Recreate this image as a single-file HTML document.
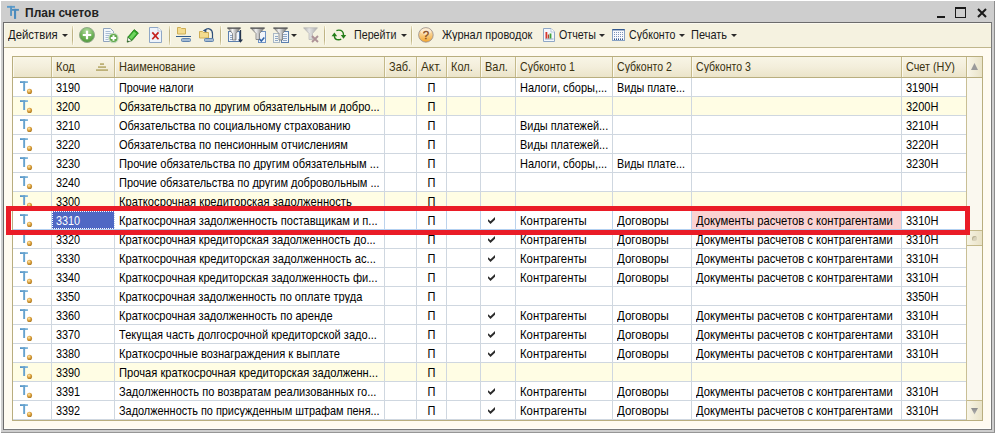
<!DOCTYPE html>
<html lang="ru"><head><meta charset="utf-8"><title>План счетов</title>
<style>
html,body{margin:0;padding:0}
body{width:995px;height:433px;overflow:hidden;background:#cecece;position:relative;font-family:"Liberation Sans",sans-serif;font-size:11px;color:#000}
.frame-t{position:absolute;left:0;top:0;width:995px;height:1px;background:#fff}
.frame-l{position:absolute;left:0;top:0;width:1px;height:433px;background:#fff}
.frame-r{position:absolute;left:994px;top:1px;width:1px;height:432px;background:#8c8c8c}
.frame-b{position:absolute;left:1px;top:432px;width:994px;height:1px;background:#969696}
.title{position:absolute;left:1px;top:1px;width:992px;height:21px}
.ticon{position:absolute;left:5px;top:4px}
.ttext{position:absolute;left:24px;top:4px;font-size:12px;line-height:16px;white-space:nowrap;color:#222;transform:scaleY(1.08);transform-origin:left center}
.wmin{position:absolute;left:936px;top:15px;width:8px;height:2px;background:#1a1a1a}
.wmax{position:absolute;left:954px;top:6px;width:9px;height:8px;border:1px solid #1a1a1a;border-top-width:2px}
.wcls{position:absolute;left:975.6px;top:6.600px}
.win{position:absolute;left:3px;top:22px;width:987px;height:406px;border:1px solid #6c6c6c;border-right-color:#7a7a7a;border-bottom-color:#7a7a7a;background:#fffbf1;box-shadow:inset -1px -1px 0 #fffffb}
.tb{position:absolute;left:0;top:0;width:987px;height:24px;background:#f5f2e0;border-bottom:1px solid #bfb68c;box-shadow:inset 1px 1px 0 #fbf9ef}
.tb .t{position:absolute;top:4px;line-height:14px;white-space:nowrap;transform:scaleY(1.14);transform-origin:left center;color:#1a1a1a}
.tb .sep{position:absolute;top:3px;width:1px;height:19px;background:linear-gradient(#e6dfc0,#bfb485 25%,#bfb485 75%,#e6dfc0);box-shadow:1px 0 0 #fbf9ee}
.tb .ar{position:absolute;top:11px;width:0;height:0;border-left:3px solid transparent;border-right:3px solid transparent;border-top:3px solid #2a2a2a}
.tb svg{position:absolute}
.grid{position:absolute;left:8px;top:33px;width:969px;height:363px;border:1px solid #b9ae7f;background:#fff;overflow:hidden}
.hdr{position:absolute;left:0;top:0;width:969px;height:20px;background:linear-gradient(#f8f5e6,#f3eedb 50%,#ebe4c9);border-bottom:1px solid #b9ae7f}
.hc{position:absolute;top:0;height:20px;border-right:1px solid #c4b98a;box-shadow:inset 1px 0 0 #fbf9ef}
.hc .t{position:absolute;left:4px;top:2px;line-height:14px;white-space:nowrap;color:#3a3210;transform:scaleY(1.14);transform-origin:left center}
.hc .sort{position:absolute;right:6px;top:6px}
.sbh{border-right:none;background:linear-gradient(90deg,#f8f5e7,#e9e3c8)}
.row{position:absolute;left:0;width:953px;height:18px;border-bottom:1px solid #cfd7e0;background:#fff}
.row.y{background:#fffde4}
.row.cur{border-bottom-color:#b2cff0}
.row.cur .c{border-right-color:#bdd3ec}
.c{position:absolute;top:0;height:18px;border-right:1px solid #cfd7e0;overflow:hidden}
.c .t{position:absolute;left:4px;top:2px;line-height:14px;white-space:nowrap;transform:scaleY(1.14);transform-origin:left center}
.c.ctr .t{left:0;right:0;text-align:center;transform-origin:center}
.c .ti{position:absolute;left:7px;top:3px}
.c .ck{position:absolute;left:7px;top:6px}
.c.sel{background:#4f68c4;outline:1px dotted #fff;outline-offset:-1px}
.c.sel .t{color:#fff}
.c.pink{background:#fbd2d2}
.sb{position:absolute;left:953px;top:21px;width:15px;height:342px;background:#faf8ef;border-left:1px solid #c9bf95}
.thumb{position:absolute;left:0;top:152px;width:15px;height:16px;background:linear-gradient(90deg,#f6f3e3,#e9e2c6);border-top:1px solid #c4b98a;border-bottom:1px solid #c4b98a;box-sizing:border-box}
.thumb i{position:absolute;left:5px;top:5px;width:5px;height:5px;border-radius:50%;background:#d8d2bb;box-shadow:inset 1px 1px 0 #bdb596}
.sbd{position:absolute;left:0;bottom:0;width:15px;height:19px;background:linear-gradient(90deg,#f8f5e7,#e9e3c8);border-top:1px solid #c4b98a}
.red{position:absolute;left:6px;top:206px;width:954px;height:19px;border:5px solid #ea1c27}

</style></head>
<body>
<div class="frame-t"></div><div class="frame-l"></div><div class="frame-r"></div><div class="frame-b"></div>
<div class="title"><svg class="ticon" width="16" height="16" viewBox="0 0 16 16"><rect x="1" y="0.900" width="8" height="1.900" fill="#5c9ccb"/><rect x="4.100" y="0.900" width="1.900" height="10" fill="#5695c4"/><rect x="5.900" y="3.900" width="7" height="1.900" fill="#4d8dbe"/><rect x="8" y="3.900" width="2.100" height="10" fill="#4b8bbd"/></svg><span class="ttext"><b>План счетов</b></span><i class="wmin"></i><i class="wmax"></i><svg class="wcls" width="10" height="10" viewBox="0 0 10 10"><path d="M1 1L9 9M9 1L1 9" stroke="#1a1a1a" stroke-width="2" fill="none"/></svg></div>
<div class="win">
<div class="tb">
<svg width="0" height="0" style="left:0;top:0"><defs><linearGradient id="fg" x1="0" x2="1" y1="0" y2="0"><stop offset="0" stop-color="#6f6f6f"/><stop offset="0.38" stop-color="#f2f2f2"/><stop offset="0.7" stop-color="#a4a4a4"/><stop offset="1" stop-color="#747474"/></linearGradient><linearGradient id="fgd" x1="0" x2="1" y1="0" y2="0"><stop offset="0" stop-color="#a9a9a9"/><stop offset="0.4" stop-color="#e4e4e4"/><stop offset="1" stop-color="#acacac"/></linearGradient></defs></svg>
<span class="t" style="left:4px;transform:scale(1.03,1.14)">Действия</span><i class="ar" style="left:58px"></i>
<i class="sep" style="left:68px"></i>
<svg style="left:75px;top:4px" width="16" height="16" viewBox="0 0 16 16"><defs><radialGradient id="gp" cx="0.5" cy="0.25" r="0.85"><stop offset="0" stop-color="#b5dca2"/><stop offset="0.55" stop-color="#6cb155"/><stop offset="1" stop-color="#468f34"/></radialGradient></defs><circle cx="8" cy="8" r="7.500" fill="url(#gp)" stroke="#93ab8c" stroke-width="1"/><path d="M8 3.800v8.400M3.800 8h8.400" stroke="#fff" stroke-width="2.200" fill="none"/></svg>
<svg style="left:99px;top:5px" width="16" height="16" viewBox="0 0 16 16"><path d="M0.500 0.500h7l3 3v10h-10z" fill="#f4f8fc" stroke="#8fa3bd"/><path d="M2.500 3.500h5M2.500 5.500h6M2.500 7.500h4M2.500 9.500h3M2.500 11.500h3" stroke="#a9bdd4" fill="none"/><circle cx="10.500" cy="10" r="4.600" fill="#5fa84a" stroke="#c3dabc" stroke-width="1.200"/><path d="M10.500 7.300v5.400M7.800 10h5.400" stroke="#fff" stroke-width="1.900" fill="none"/></svg>
<svg style="left:122px;top:6px" width="14" height="14" viewBox="0 0 14 14"><path d="M8.200 0.600l4.200 3.400-6.400 7.600-4.200-3.400z" fill="#2fa524" stroke="#1f7a18" stroke-width="0.800"/><path d="M8 2.600l2.400 2-5 6-2.400-2z" fill="#6fd45f"/><path d="M1.800 8.200l4.200 3.400-4.800 1.600z" fill="#f1f5ee" stroke="#2d6b24" stroke-width="0.700"/><path d="M1.200 13.200l0.500-2 1.400 1.200z" fill="#1d4d16"/></svg>
<svg style="left:145px;top:4px" width="13" height="16" viewBox="0 0 13 16"><path d="M0.500 0.500h8.500l3.500 3.500v11.500h-12z" fill="#eef4fb" stroke="#8fa7c6"/><path d="M9 0.500v3.500h3.500" fill="#fff" stroke="#a9bdd4" stroke-width="0.800"/><path d="M3.300 5.400l6.200 6.800M9.500 5.400l-6.200 6.800" stroke="#c4221f" stroke-width="1.700" fill="none"/></svg>
<i class="sep" style="left:165px"></i>
<svg style="left:172px;top:4px" width="16" height="16" viewBox="0 0 16 16"><path d="M1.500 0.500h3l1 1h4v5.500h-8z" fill="#f4dc8f" stroke="#cfae55"/><path d="M0 9.500h15" stroke="#2f5a8c" stroke-width="1" fill="none"/><rect x="5.500" y="11.500" width="9" height="3" rx="1" fill="#a3bad3" stroke="#5f83ae"/></svg>
<svg style="left:195px;top:4px" width="16" height="16" viewBox="0 0 16 16"><path d="M0.500 4.500h3l1 1h5v5.500h-9z" fill="#f4dc8f" stroke="#cfae55"/><path d="M6 3.300C9 0.300 13.500 1.800 13.500 7v5" stroke="#2e4f7a" stroke-width="1.200" fill="none"/><path d="M3.800 3.600l3.600-2.200v4.200z" fill="#2e4f7a"/><rect x="5.500" y="11.500" width="9" height="3" rx="1" fill="#a3bad3" stroke="#5f83ae"/></svg>
<i class="sep" style="left:216px"></i>
<svg style="left:223px;top:4px" width="16" height="16" viewBox="0 0 16 16"><rect x="1.5" y="4.5" width="11" height="10" fill="#f1f5fb" stroke="#5b7fae"/><path d="M3 8.5h3M3 10.5h3M3 12.5h3" stroke="#8fa7c6" fill="none"/><path d="M0.5 0.8h13L9 6.5v6.5h-3.5V6.5z" fill="url(#fg)" stroke="#6a6a6a" stroke-width="0.700"/><path d="M0.500 1.300h13" stroke="#5c5c5c" stroke-width="1.100"/><path d="M13.5 3v11" stroke="#27364d" stroke-width="1.3"/><path d="M11 12.5h5l-2.5 3.2z" fill="#27364d"/></svg>
<svg style="left:246px;top:4px" width="16" height="16" viewBox="0 0 16 16"><rect x="8.5" y="4.500" width="7" height="11" fill="#f1f5fb" stroke="#6f93c4"/><path d="M0.5 0.8h14L9.5 6.5v6h-3.5V6.5z" fill="url(#fg)" stroke="#6a6a6a" stroke-width="0.700"/><path d="M0.500 1.300h14" stroke="#5c5c5c" stroke-width="1.100"/><path d="M9.500 12l1.800 2 3-3.600" stroke="#2d62a8" stroke-width="1.500" fill="none"/></svg>
<svg style="left:269px;top:4px" width="16" height="16" viewBox="0 0 16 16"><rect x="0.5" y="6.5" width="6" height="9" fill="#f3f6f1" stroke="#a9b8c6"/><rect x="8.5" y="4.5" width="7" height="11" fill="#f1f5fb" stroke="#5b7fae"/><path d="M10 7.500h4M10 9.500h4M10 11.500h4M10 13.500h4M2 9.500h3M2 11.500h3M2 13.500h3" stroke="#8fa7c6" fill="none"/><path d="M0.5 0.8h14L9.500 6.500v6.500h-3.500V6.500z" fill="url(#fg)" stroke="#6a6a6a" stroke-width="0.700"/><path d="M0.500 1.300h14" stroke="#5c5c5c" stroke-width="1.100"/></svg>
<i class="ar" style="left:287px;top:11px"></i>
<svg style="left:299px;top:4px" width="16" height="16" viewBox="0 0 16 16"><path d="M0.5 0.8h14L9.500 6.500v6h-3.500V6.500z" fill="url(#fgd)" stroke="#b4b4b4" stroke-width="0.700"/><path d="M9 9l6 6M15 9l-6 6" stroke="#ad9297" stroke-width="1.900" fill="none"/></svg>
<i class="sep" style="left:320px"></i>
<svg style="left:327px;top:6px" width="16" height="12" viewBox="0 0 16 12"><path d="M3.400 7C3.400 9.500 5.500 10.800 7.700 10.800C8.600 10.800 9.500 10.600 10.200 10.200" stroke="#237d18" stroke-width="1.400" fill="none"/><path d="M5.400 1.600C6.100 1.300 6.900 1.100 7.700 1.100C10.500 1.100 12.500 3 12.500 6" stroke="#237d18" stroke-width="1.400" fill="none"/><path d="M3.400 3.400L0.600 7.200h5.600z" fill="#237d18"/><path d="M12.500 9.700L9.800 6h5.400z" fill="#237d18"/></svg>
<span class="t" style="left:350px;transform:scale(0.972,1.14)">Перейти</span><i class="ar" style="left:397px"></i>
<i class="sep" style="left:407px"></i>
<svg style="left:414px;top:4px" width="16" height="16" viewBox="0 0 16 16"><defs><linearGradient id="gq" x1="0" x2="0" y1="0" y2="1"><stop offset="0" stop-color="#fbe6c2"/><stop offset="0.5" stop-color="#f8cc84"/><stop offset="1" stop-color="#f3a52c"/></linearGradient></defs><circle cx="7.900" cy="7.900" r="7.300" fill="url(#gq)" stroke="#968c8c" stroke-width="0.800"/><ellipse cx="7.900" cy="4.600" rx="5.300" ry="3.200" fill="#fff" opacity="0.450"/><text x="8" y="12.400" text-anchor="middle" font-family="Liberation Sans, sans-serif" font-size="11.500" stroke="#8a4f1c" stroke-width="0.350" fill="#8a4f1c">?</text></svg>
<span class="t" style="left:438px">Журнал проводок</span>
<svg style="left:539px;top:5px" width="12" height="14" viewBox="0 0 12 14"><path d="M0.500 0.500h7.500l3.500 3.500v9.500h-11z" fill="#f4f8fc" stroke="#8fa7c6"/><path d="M8 0.500v3.500h3.500" fill="#fff" stroke="#a9bdd4" stroke-width="0.800"/><path d="M2 11h8.500" stroke="#8fa7c6" fill="none"/><rect x="2.500" y="4" width="1.800" height="6.500" fill="#d9372c"/><rect x="4.800" y="6.500" width="1.300" height="4" fill="#b5452c"/><rect x="6.600" y="5.500" width="1.800" height="5" fill="#3da03a"/></svg>
<span class="t" style="left:555px;transform:scale(0.97,1.14)">Отчеты</span><i class="ar" style="left:595px"></i>
<svg style="left:608px;top:6px" width="13" height="12" viewBox="0 0 13 12"><rect x="0.500" y="0.500" width="12" height="11" fill="#f8fafd" stroke="#88a2c4"/><path d="M0.500 0.700h12" stroke="#34598f" stroke-width="1.400"/><path d="M2.500 3v8M4.500 3v8M6.500 3v8M8.500 3v8M10.500 3v8" stroke="#7f95b8" stroke-dasharray="1 1" fill="none"/><path d="M2 10.500h9" stroke="#34598f" stroke-dasharray="1 1" fill="none"/></svg>
<span class="t" style="left:625px;transform:scale(0.965,1.14)">Субконто</span><i class="ar" style="left:675px"></i>
<span class="t" style="left:687px">Печать</span><i class="ar" style="left:727px"></i>
</div>
<div class="grid">
<div class="hdr"><div class="hc" style="left:0px;width:38px"><span class="t"></span></div><div class="hc" style="left:39px;width:62px"><span class="t">Код</span><svg class="sort" width="12" height="8" viewBox="0 0 12 8"><defs><linearGradient id="sg" x1="0" x2="0" y1="0" y2="1"><stop offset="0" stop-color="#cfc593"/><stop offset="1" stop-color="#b7aa70"/></linearGradient></defs><rect x="4" y="0" width="4" height="2" fill="url(#sg)"/><rect x="2" y="3" width="8" height="2" fill="url(#sg)"/><rect x="0" y="6" width="12" height="2" fill="url(#sg)"/></svg></div><div class="hc" style="left:102px;width:269px"><span class="t">Наименование</span></div><div class="hc" style="left:372px;width:31px"><span class="t">Заб.</span></div><div class="hc" style="left:404px;width:29px"><span class="t" style="transform:scale(1.07,1.14)">Акт.</span></div><div class="hc" style="left:434px;width:33px"><span class="t">Кол.</span></div><div class="hc" style="left:468px;width:34px"><span class="t">Вал.</span></div><div class="hc" style="left:503px;width:96px"><span class="t" style="transform:scale(0.96,1.14)">Субконто 1</span></div><div class="hc" style="left:600px;width:78px"><span class="t" style="transform:scale(0.96,1.14)">Субконто 2</span></div><div class="hc" style="left:679px;width:209px"><span class="t" style="transform:scale(0.96,1.14)">Субконто 3</span></div><div class="hc" style="left:889px;width:64px"><span class="t" style="transform:scale(0.985,1.14)">Счет (НУ)</span></div><div class="hc sbh" style="left:954px;width:15px"><svg width="7" height="7" viewBox="0 0 7 7" style="position:absolute;left:4px;top:6px"><path d="M3.500 0L7 7H0z" fill="#9a9a9a"/></svg></div></div>
<div class="row" style="top:21px"><div class="c" style="left:0px;width:38px"><svg class="ti" width="14" height="14" viewBox="0 0 14 14"><defs><radialGradient id="g0" cx="0.4" cy="0.35" r="0.7"><stop offset="0" stop-color="#ffeebb"/><stop offset="0.45" stop-color="#e2aa48"/><stop offset="1" stop-color="#a9741c"/></radialGradient><linearGradient id="t0" x1="0" x2="1" y1="0" y2="0"><stop offset="0" stop-color="#4f90c4"/><stop offset="1" stop-color="#86bbde"/></linearGradient></defs><rect x="0" y="0.200" width="8" height="1.800" fill="url(#t0)"/><rect x="3.200" y="0.200" width="1.900" height="9.800" fill="#65a2cf"/><circle cx="9.500" cy="10.400" r="2.550" fill="url(#g0)"/></svg></div><div class="c" style="left:39px;width:62px"><span class="t" style="transform:scale(0.985,1.14)">3190</span></div><div class="c" style="left:102px;width:269px"><span class="t" style="transform:scale(0.98,1.14)">Прочие налоги</span></div><div class="c" style="left:372px;width:31px"><span class="t"></span></div><div class="c ctr" style="left:404px;width:29px"><span class="t">П</span></div><div class="c" style="left:434px;width:33px"><span class="t"></span></div><div class="c" style="left:468px;width:34px"></div><div class="c" style="left:503px;width:96px"><span class="t">Налоги, сборы,...</span></div><div class="c" style="left:600px;width:78px"><span class="t" style="transform:scale(0.98,1.14)">Виды плате...</span></div><div class="c" style="left:679px;width:209px"><span class="t"></span></div><div class="c" style="left:889px;width:64px"><span class="t">3190Н</span></div></div>
<div class="row y" style="top:40px"><div class="c" style="left:0px;width:38px"><svg class="ti" width="14" height="14" viewBox="0 0 14 14"><defs><radialGradient id="g1" cx="0.4" cy="0.35" r="0.7"><stop offset="0" stop-color="#ffeebb"/><stop offset="0.45" stop-color="#e2aa48"/><stop offset="1" stop-color="#a9741c"/></radialGradient><linearGradient id="t1" x1="0" x2="1" y1="0" y2="0"><stop offset="0" stop-color="#4f90c4"/><stop offset="1" stop-color="#86bbde"/></linearGradient></defs><rect x="0" y="0.200" width="8" height="1.800" fill="url(#t1)"/><rect x="3.200" y="0.200" width="1.900" height="9.800" fill="#65a2cf"/><circle cx="9.500" cy="10.400" r="2.550" fill="url(#g1)"/></svg></div><div class="c" style="left:39px;width:62px"><span class="t" style="transform:scale(0.985,1.14)">3200</span></div><div class="c" style="left:102px;width:269px"><span class="t" style="transform:scale(1.0045,1.14)">Обязательства по другим обязательным и добро...</span></div><div class="c" style="left:372px;width:31px"><span class="t"></span></div><div class="c ctr" style="left:404px;width:29px"><span class="t">П</span></div><div class="c" style="left:434px;width:33px"><span class="t"></span></div><div class="c" style="left:468px;width:34px"></div><div class="c" style="left:503px;width:96px"><span class="t"></span></div><div class="c" style="left:600px;width:78px"><span class="t"></span></div><div class="c" style="left:679px;width:209px"><span class="t"></span></div><div class="c" style="left:889px;width:64px"><span class="t">3200Н</span></div></div>
<div class="row" style="top:59px"><div class="c" style="left:0px;width:38px"><svg class="ti" width="14" height="14" viewBox="0 0 14 14"><defs><radialGradient id="g2" cx="0.4" cy="0.35" r="0.7"><stop offset="0" stop-color="#ffeebb"/><stop offset="0.45" stop-color="#e2aa48"/><stop offset="1" stop-color="#a9741c"/></radialGradient><linearGradient id="t2" x1="0" x2="1" y1="0" y2="0"><stop offset="0" stop-color="#4f90c4"/><stop offset="1" stop-color="#86bbde"/></linearGradient></defs><rect x="0" y="0.200" width="8" height="1.800" fill="url(#t2)"/><rect x="3.200" y="0.200" width="1.900" height="9.800" fill="#65a2cf"/><circle cx="9.500" cy="10.400" r="2.550" fill="url(#g2)"/></svg></div><div class="c" style="left:39px;width:62px"><span class="t" style="transform:scale(0.985,1.14)">3210</span></div><div class="c" style="left:102px;width:269px"><span class="t" style="transform:scale(0.996,1.14)">Обязательства по социальному страхованию</span></div><div class="c" style="left:372px;width:31px"><span class="t"></span></div><div class="c ctr" style="left:404px;width:29px"><span class="t">П</span></div><div class="c" style="left:434px;width:33px"><span class="t"></span></div><div class="c" style="left:468px;width:34px"></div><div class="c" style="left:503px;width:96px"><span class="t" style="transform:scale(0.993,1.14)">Виды платежей...</span></div><div class="c" style="left:600px;width:78px"><span class="t"></span></div><div class="c" style="left:679px;width:209px"><span class="t"></span></div><div class="c" style="left:889px;width:64px"><span class="t">3210Н</span></div></div>
<div class="row" style="top:78px"><div class="c" style="left:0px;width:38px"><svg class="ti" width="14" height="14" viewBox="0 0 14 14"><defs><radialGradient id="g3" cx="0.4" cy="0.35" r="0.7"><stop offset="0" stop-color="#ffeebb"/><stop offset="0.45" stop-color="#e2aa48"/><stop offset="1" stop-color="#a9741c"/></radialGradient><linearGradient id="t3" x1="0" x2="1" y1="0" y2="0"><stop offset="0" stop-color="#4f90c4"/><stop offset="1" stop-color="#86bbde"/></linearGradient></defs><rect x="0" y="0.200" width="8" height="1.800" fill="url(#t3)"/><rect x="3.200" y="0.200" width="1.900" height="9.800" fill="#65a2cf"/><circle cx="9.500" cy="10.400" r="2.550" fill="url(#g3)"/></svg></div><div class="c" style="left:39px;width:62px"><span class="t" style="transform:scale(0.985,1.14)">3220</span></div><div class="c" style="left:102px;width:269px"><span class="t" style="transform:scale(1.004,1.14)">Обязательства по пенсионным отчислениям</span></div><div class="c" style="left:372px;width:31px"><span class="t"></span></div><div class="c ctr" style="left:404px;width:29px"><span class="t">П</span></div><div class="c" style="left:434px;width:33px"><span class="t"></span></div><div class="c" style="left:468px;width:34px"></div><div class="c" style="left:503px;width:96px"><span class="t" style="transform:scale(0.993,1.14)">Виды платежей...</span></div><div class="c" style="left:600px;width:78px"><span class="t"></span></div><div class="c" style="left:679px;width:209px"><span class="t"></span></div><div class="c" style="left:889px;width:64px"><span class="t">3220Н</span></div></div>
<div class="row" style="top:97px"><div class="c" style="left:0px;width:38px"><svg class="ti" width="14" height="14" viewBox="0 0 14 14"><defs><radialGradient id="g4" cx="0.4" cy="0.35" r="0.7"><stop offset="0" stop-color="#ffeebb"/><stop offset="0.45" stop-color="#e2aa48"/><stop offset="1" stop-color="#a9741c"/></radialGradient><linearGradient id="t4" x1="0" x2="1" y1="0" y2="0"><stop offset="0" stop-color="#4f90c4"/><stop offset="1" stop-color="#86bbde"/></linearGradient></defs><rect x="0" y="0.200" width="8" height="1.800" fill="url(#t4)"/><rect x="3.200" y="0.200" width="1.900" height="9.800" fill="#65a2cf"/><circle cx="9.500" cy="10.400" r="2.550" fill="url(#g4)"/></svg></div><div class="c" style="left:39px;width:62px"><span class="t" style="transform:scale(0.985,1.14)">3230</span></div><div class="c" style="left:102px;width:269px"><span class="t" style="transform:scale(1.009,1.14)">Прочие обязательства по другим обязательным ...</span></div><div class="c" style="left:372px;width:31px"><span class="t"></span></div><div class="c ctr" style="left:404px;width:29px"><span class="t">П</span></div><div class="c" style="left:434px;width:33px"><span class="t"></span></div><div class="c" style="left:468px;width:34px"></div><div class="c" style="left:503px;width:96px"><span class="t">Налоги, сборы,...</span></div><div class="c" style="left:600px;width:78px"><span class="t" style="transform:scale(0.98,1.14)">Виды плате...</span></div><div class="c" style="left:679px;width:209px"><span class="t"></span></div><div class="c" style="left:889px;width:64px"><span class="t">3230Н</span></div></div>
<div class="row" style="top:116px"><div class="c" style="left:0px;width:38px"><svg class="ti" width="14" height="14" viewBox="0 0 14 14"><defs><radialGradient id="g5" cx="0.4" cy="0.35" r="0.7"><stop offset="0" stop-color="#ffeebb"/><stop offset="0.45" stop-color="#e2aa48"/><stop offset="1" stop-color="#a9741c"/></radialGradient><linearGradient id="t5" x1="0" x2="1" y1="0" y2="0"><stop offset="0" stop-color="#4f90c4"/><stop offset="1" stop-color="#86bbde"/></linearGradient></defs><rect x="0" y="0.200" width="8" height="1.800" fill="url(#t5)"/><rect x="3.200" y="0.200" width="1.900" height="9.800" fill="#65a2cf"/><circle cx="9.500" cy="10.400" r="2.550" fill="url(#g5)"/></svg></div><div class="c" style="left:39px;width:62px"><span class="t" style="transform:scale(0.985,1.14)">3240</span></div><div class="c" style="left:102px;width:269px"><span class="t" style="transform:scale(1.0,1.14)">Прочие обязательства по другим добровольным ...</span></div><div class="c" style="left:372px;width:31px"><span class="t"></span></div><div class="c ctr" style="left:404px;width:29px"><span class="t">П</span></div><div class="c" style="left:434px;width:33px"><span class="t"></span></div><div class="c" style="left:468px;width:34px"></div><div class="c" style="left:503px;width:96px"><span class="t"></span></div><div class="c" style="left:600px;width:78px"><span class="t"></span></div><div class="c" style="left:679px;width:209px"><span class="t"></span></div><div class="c" style="left:889px;width:64px"><span class="t"></span></div></div>
<div class="row y" style="top:135px"><div class="c" style="left:0px;width:38px"><svg class="ti" width="14" height="14" viewBox="0 0 14 14"><defs><radialGradient id="g6" cx="0.4" cy="0.35" r="0.7"><stop offset="0" stop-color="#ffeebb"/><stop offset="0.45" stop-color="#e2aa48"/><stop offset="1" stop-color="#a9741c"/></radialGradient><linearGradient id="t6" x1="0" x2="1" y1="0" y2="0"><stop offset="0" stop-color="#4f90c4"/><stop offset="1" stop-color="#86bbde"/></linearGradient></defs><rect x="0" y="0.200" width="8" height="1.800" fill="url(#t6)"/><rect x="3.200" y="0.200" width="1.900" height="9.800" fill="#65a2cf"/><circle cx="9.500" cy="10.400" r="2.550" fill="url(#g6)"/></svg></div><div class="c" style="left:39px;width:62px"><span class="t" style="transform:scale(0.985,1.14)">3300</span></div><div class="c" style="left:102px;width:269px"><span class="t" style="transform:scale(1.0166,1.14)">Краткосрочная кредиторская задолженность</span></div><div class="c" style="left:372px;width:31px"><span class="t"></span></div><div class="c ctr" style="left:404px;width:29px"><span class="t">П</span></div><div class="c" style="left:434px;width:33px"><span class="t"></span></div><div class="c" style="left:468px;width:34px"></div><div class="c" style="left:503px;width:96px"><span class="t"></span></div><div class="c" style="left:600px;width:78px"><span class="t"></span></div><div class="c" style="left:679px;width:209px"><span class="t"></span></div><div class="c" style="left:889px;width:64px"><span class="t"></span></div></div>
<div class="row cur" style="top:154px"><div class="c" style="left:0px;width:38px"><svg class="ti" width="14" height="14" viewBox="0 0 14 14"><defs><radialGradient id="g7" cx="0.4" cy="0.35" r="0.7"><stop offset="0" stop-color="#ffeebb"/><stop offset="0.45" stop-color="#e2aa48"/><stop offset="1" stop-color="#a9741c"/></radialGradient><linearGradient id="t7" x1="0" x2="1" y1="0" y2="0"><stop offset="0" stop-color="#4f90c4"/><stop offset="1" stop-color="#86bbde"/></linearGradient></defs><rect x="0" y="0.200" width="8" height="1.800" fill="url(#t7)"/><rect x="3.200" y="0.200" width="1.900" height="9.800" fill="#65a2cf"/><circle cx="9.500" cy="10.400" r="2.550" fill="url(#g7)"/></svg></div><div class="c sel" style="left:39px;width:62px"><span class="t" style="transform:scale(0.985,1.14)">3310</span></div><div class="c" style="left:102px;width:269px"><span class="t" style="transform:scale(1.0115,1.14)">Краткосрочная задолженность поставщикам и п...</span></div><div class="c" style="left:372px;width:31px"><span class="t"></span></div><div class="c ctr" style="left:404px;width:29px"><span class="t">П</span></div><div class="c" style="left:434px;width:33px"><span class="t"></span></div><div class="c" style="left:468px;width:34px"><svg class="ck" width="8" height="8" viewBox="0 0 8 8"><path d="M0 2.200L2.500 4.300L7 0V2.800L2.500 6.900L0 4.300Z" fill="#2b2b2b"/></svg></div><div class="c" style="left:503px;width:96px"><span class="t" style="transform:scale(1.03,1.14)">Контрагенты</span></div><div class="c" style="left:600px;width:78px"><span class="t" style="transform:scale(1.045,1.14)">Договоры</span></div><div class="c pink" style="left:679px;width:209px"><span class="t" style="transform:scale(1.023,1.14)">Документы расчетов с контрагентами</span></div><div class="c" style="left:889px;width:64px"><span class="t">3310Н</span></div></div>
<div class="row" style="top:173px"><div class="c" style="left:0px;width:38px"><svg class="ti" width="14" height="14" viewBox="0 0 14 14"><defs><radialGradient id="g8" cx="0.4" cy="0.35" r="0.7"><stop offset="0" stop-color="#ffeebb"/><stop offset="0.45" stop-color="#e2aa48"/><stop offset="1" stop-color="#a9741c"/></radialGradient><linearGradient id="t8" x1="0" x2="1" y1="0" y2="0"><stop offset="0" stop-color="#4f90c4"/><stop offset="1" stop-color="#86bbde"/></linearGradient></defs><rect x="0" y="0.200" width="8" height="1.800" fill="url(#t8)"/><rect x="3.200" y="0.200" width="1.900" height="9.800" fill="#65a2cf"/><circle cx="9.500" cy="10.400" r="2.550" fill="url(#g8)"/></svg></div><div class="c" style="left:39px;width:62px"><span class="t" style="transform:scale(0.985,1.14)">3320</span></div><div class="c" style="left:102px;width:269px"><span class="t" style="transform:scale(1.0115,1.14)">Краткосрочная кредиторская задолженность до...</span></div><div class="c" style="left:372px;width:31px"><span class="t"></span></div><div class="c ctr" style="left:404px;width:29px"><span class="t">П</span></div><div class="c" style="left:434px;width:33px"><span class="t"></span></div><div class="c" style="left:468px;width:34px"><svg class="ck" width="8" height="8" viewBox="0 0 8 8"><path d="M0 2.200L2.500 4.300L7 0V2.800L2.500 6.900L0 4.300Z" fill="#2b2b2b"/></svg></div><div class="c" style="left:503px;width:96px"><span class="t" style="transform:scale(1.03,1.14)">Контрагенты</span></div><div class="c" style="left:600px;width:78px"><span class="t" style="transform:scale(1.045,1.14)">Договоры</span></div><div class="c" style="left:679px;width:209px"><span class="t" style="transform:scale(1.023,1.14)">Документы расчетов с контрагентами</span></div><div class="c" style="left:889px;width:64px"><span class="t">3310Н</span></div></div>
<div class="row" style="top:192px"><div class="c" style="left:0px;width:38px"><svg class="ti" width="14" height="14" viewBox="0 0 14 14"><defs><radialGradient id="g9" cx="0.4" cy="0.35" r="0.7"><stop offset="0" stop-color="#ffeebb"/><stop offset="0.45" stop-color="#e2aa48"/><stop offset="1" stop-color="#a9741c"/></radialGradient><linearGradient id="t9" x1="0" x2="1" y1="0" y2="0"><stop offset="0" stop-color="#4f90c4"/><stop offset="1" stop-color="#86bbde"/></linearGradient></defs><rect x="0" y="0.200" width="8" height="1.800" fill="url(#t9)"/><rect x="3.200" y="0.200" width="1.900" height="9.800" fill="#65a2cf"/><circle cx="9.500" cy="10.400" r="2.550" fill="url(#g9)"/></svg></div><div class="c" style="left:39px;width:62px"><span class="t" style="transform:scale(0.985,1.14)">3330</span></div><div class="c" style="left:102px;width:269px"><span class="t" style="transform:scale(1.016,1.14)">Краткосрочная кредиторская задолженность ас...</span></div><div class="c" style="left:372px;width:31px"><span class="t"></span></div><div class="c ctr" style="left:404px;width:29px"><span class="t">П</span></div><div class="c" style="left:434px;width:33px"><span class="t"></span></div><div class="c" style="left:468px;width:34px"><svg class="ck" width="8" height="8" viewBox="0 0 8 8"><path d="M0 2.200L2.500 4.300L7 0V2.800L2.500 6.900L0 4.300Z" fill="#2b2b2b"/></svg></div><div class="c" style="left:503px;width:96px"><span class="t" style="transform:scale(1.03,1.14)">Контрагенты</span></div><div class="c" style="left:600px;width:78px"><span class="t" style="transform:scale(1.045,1.14)">Договоры</span></div><div class="c" style="left:679px;width:209px"><span class="t" style="transform:scale(1.023,1.14)">Документы расчетов с контрагентами</span></div><div class="c" style="left:889px;width:64px"><span class="t">3310Н</span></div></div>
<div class="row" style="top:211px"><div class="c" style="left:0px;width:38px"><svg class="ti" width="14" height="14" viewBox="0 0 14 14"><defs><radialGradient id="g10" cx="0.4" cy="0.35" r="0.7"><stop offset="0" stop-color="#ffeebb"/><stop offset="0.45" stop-color="#e2aa48"/><stop offset="1" stop-color="#a9741c"/></radialGradient><linearGradient id="t10" x1="0" x2="1" y1="0" y2="0"><stop offset="0" stop-color="#4f90c4"/><stop offset="1" stop-color="#86bbde"/></linearGradient></defs><rect x="0" y="0.200" width="8" height="1.800" fill="url(#t10)"/><rect x="3.200" y="0.200" width="1.900" height="9.800" fill="#65a2cf"/><circle cx="9.500" cy="10.400" r="2.550" fill="url(#g10)"/></svg></div><div class="c" style="left:39px;width:62px"><span class="t" style="transform:scale(0.985,1.14)">3340</span></div><div class="c" style="left:102px;width:269px"><span class="t" style="transform:scale(1.008,1.14)">Краткосрочная кредиторская задолженность фи...</span></div><div class="c" style="left:372px;width:31px"><span class="t"></span></div><div class="c ctr" style="left:404px;width:29px"><span class="t">П</span></div><div class="c" style="left:434px;width:33px"><span class="t"></span></div><div class="c" style="left:468px;width:34px"><svg class="ck" width="8" height="8" viewBox="0 0 8 8"><path d="M0 2.200L2.500 4.300L7 0V2.800L2.500 6.900L0 4.300Z" fill="#2b2b2b"/></svg></div><div class="c" style="left:503px;width:96px"><span class="t" style="transform:scale(1.03,1.14)">Контрагенты</span></div><div class="c" style="left:600px;width:78px"><span class="t" style="transform:scale(1.045,1.14)">Договоры</span></div><div class="c" style="left:679px;width:209px"><span class="t" style="transform:scale(1.023,1.14)">Документы расчетов с контрагентами</span></div><div class="c" style="left:889px;width:64px"><span class="t">3310Н</span></div></div>
<div class="row" style="top:230px"><div class="c" style="left:0px;width:38px"><svg class="ti" width="14" height="14" viewBox="0 0 14 14"><defs><radialGradient id="g11" cx="0.4" cy="0.35" r="0.7"><stop offset="0" stop-color="#ffeebb"/><stop offset="0.45" stop-color="#e2aa48"/><stop offset="1" stop-color="#a9741c"/></radialGradient><linearGradient id="t11" x1="0" x2="1" y1="0" y2="0"><stop offset="0" stop-color="#4f90c4"/><stop offset="1" stop-color="#86bbde"/></linearGradient></defs><rect x="0" y="0.200" width="8" height="1.800" fill="url(#t11)"/><rect x="3.200" y="0.200" width="1.900" height="9.800" fill="#65a2cf"/><circle cx="9.500" cy="10.400" r="2.550" fill="url(#g11)"/></svg></div><div class="c" style="left:39px;width:62px"><span class="t" style="transform:scale(0.985,1.14)">3350</span></div><div class="c" style="left:102px;width:269px"><span class="t" style="transform:scale(1.005,1.14)">Краткосрочная задолженность по оплате труда</span></div><div class="c" style="left:372px;width:31px"><span class="t"></span></div><div class="c ctr" style="left:404px;width:29px"><span class="t">П</span></div><div class="c" style="left:434px;width:33px"><span class="t"></span></div><div class="c" style="left:468px;width:34px"></div><div class="c" style="left:503px;width:96px"><span class="t"></span></div><div class="c" style="left:600px;width:78px"><span class="t"></span></div><div class="c" style="left:679px;width:209px"><span class="t"></span></div><div class="c" style="left:889px;width:64px"><span class="t">3350Н</span></div></div>
<div class="row" style="top:249px"><div class="c" style="left:0px;width:38px"><svg class="ti" width="14" height="14" viewBox="0 0 14 14"><defs><radialGradient id="g12" cx="0.4" cy="0.35" r="0.7"><stop offset="0" stop-color="#ffeebb"/><stop offset="0.45" stop-color="#e2aa48"/><stop offset="1" stop-color="#a9741c"/></radialGradient><linearGradient id="t12" x1="0" x2="1" y1="0" y2="0"><stop offset="0" stop-color="#4f90c4"/><stop offset="1" stop-color="#86bbde"/></linearGradient></defs><rect x="0" y="0.200" width="8" height="1.800" fill="url(#t12)"/><rect x="3.200" y="0.200" width="1.900" height="9.800" fill="#65a2cf"/><circle cx="9.500" cy="10.400" r="2.550" fill="url(#g12)"/></svg></div><div class="c" style="left:39px;width:62px"><span class="t" style="transform:scale(0.985,1.14)">3360</span></div><div class="c" style="left:102px;width:269px"><span class="t" style="transform:scale(1.008,1.14)">Краткосрочная задолженность по аренде</span></div><div class="c" style="left:372px;width:31px"><span class="t"></span></div><div class="c ctr" style="left:404px;width:29px"><span class="t">П</span></div><div class="c" style="left:434px;width:33px"><span class="t"></span></div><div class="c" style="left:468px;width:34px"><svg class="ck" width="8" height="8" viewBox="0 0 8 8"><path d="M0 2.200L2.500 4.300L7 0V2.800L2.500 6.900L0 4.300Z" fill="#2b2b2b"/></svg></div><div class="c" style="left:503px;width:96px"><span class="t" style="transform:scale(1.03,1.14)">Контрагенты</span></div><div class="c" style="left:600px;width:78px"><span class="t" style="transform:scale(1.045,1.14)">Договоры</span></div><div class="c" style="left:679px;width:209px"><span class="t" style="transform:scale(1.023,1.14)">Документы расчетов с контрагентами</span></div><div class="c" style="left:889px;width:64px"><span class="t">3310Н</span></div></div>
<div class="row" style="top:268px"><div class="c" style="left:0px;width:38px"><svg class="ti" width="14" height="14" viewBox="0 0 14 14"><defs><radialGradient id="g13" cx="0.4" cy="0.35" r="0.7"><stop offset="0" stop-color="#ffeebb"/><stop offset="0.45" stop-color="#e2aa48"/><stop offset="1" stop-color="#a9741c"/></radialGradient><linearGradient id="t13" x1="0" x2="1" y1="0" y2="0"><stop offset="0" stop-color="#4f90c4"/><stop offset="1" stop-color="#86bbde"/></linearGradient></defs><rect x="0" y="0.200" width="8" height="1.800" fill="url(#t13)"/><rect x="3.200" y="0.200" width="1.900" height="9.800" fill="#65a2cf"/><circle cx="9.500" cy="10.400" r="2.550" fill="url(#g13)"/></svg></div><div class="c" style="left:39px;width:62px"><span class="t" style="transform:scale(0.985,1.14)">3370</span></div><div class="c" style="left:102px;width:269px"><span class="t" style="transform:scale(1.006,1.14)">Текущая часть долгосрочной кредиторской задо...</span></div><div class="c" style="left:372px;width:31px"><span class="t"></span></div><div class="c ctr" style="left:404px;width:29px"><span class="t">П</span></div><div class="c" style="left:434px;width:33px"><span class="t"></span></div><div class="c" style="left:468px;width:34px"><svg class="ck" width="8" height="8" viewBox="0 0 8 8"><path d="M0 2.200L2.500 4.300L7 0V2.800L2.500 6.900L0 4.300Z" fill="#2b2b2b"/></svg></div><div class="c" style="left:503px;width:96px"><span class="t" style="transform:scale(1.03,1.14)">Контрагенты</span></div><div class="c" style="left:600px;width:78px"><span class="t" style="transform:scale(1.045,1.14)">Договоры</span></div><div class="c" style="left:679px;width:209px"><span class="t" style="transform:scale(1.023,1.14)">Документы расчетов с контрагентами</span></div><div class="c" style="left:889px;width:64px"><span class="t">3310Н</span></div></div>
<div class="row" style="top:287px"><div class="c" style="left:0px;width:38px"><svg class="ti" width="14" height="14" viewBox="0 0 14 14"><defs><radialGradient id="g14" cx="0.4" cy="0.35" r="0.7"><stop offset="0" stop-color="#ffeebb"/><stop offset="0.45" stop-color="#e2aa48"/><stop offset="1" stop-color="#a9741c"/></radialGradient><linearGradient id="t14" x1="0" x2="1" y1="0" y2="0"><stop offset="0" stop-color="#4f90c4"/><stop offset="1" stop-color="#86bbde"/></linearGradient></defs><rect x="0" y="0.200" width="8" height="1.800" fill="url(#t14)"/><rect x="3.200" y="0.200" width="1.900" height="9.800" fill="#65a2cf"/><circle cx="9.500" cy="10.400" r="2.550" fill="url(#g14)"/></svg></div><div class="c" style="left:39px;width:62px"><span class="t" style="transform:scale(0.985,1.14)">3380</span></div><div class="c" style="left:102px;width:269px"><span class="t" style="transform:scale(1.013,1.14)">Краткосрочные вознаграждения к выплате</span></div><div class="c" style="left:372px;width:31px"><span class="t"></span></div><div class="c ctr" style="left:404px;width:29px"><span class="t">П</span></div><div class="c" style="left:434px;width:33px"><span class="t"></span></div><div class="c" style="left:468px;width:34px"><svg class="ck" width="8" height="8" viewBox="0 0 8 8"><path d="M0 2.200L2.500 4.300L7 0V2.800L2.500 6.900L0 4.300Z" fill="#2b2b2b"/></svg></div><div class="c" style="left:503px;width:96px"><span class="t" style="transform:scale(1.03,1.14)">Контрагенты</span></div><div class="c" style="left:600px;width:78px"><span class="t" style="transform:scale(1.045,1.14)">Договоры</span></div><div class="c" style="left:679px;width:209px"><span class="t" style="transform:scale(1.023,1.14)">Документы расчетов с контрагентами</span></div><div class="c" style="left:889px;width:64px"><span class="t">3310Н</span></div></div>
<div class="row y" style="top:306px"><div class="c" style="left:0px;width:38px"><svg class="ti" width="14" height="14" viewBox="0 0 14 14"><defs><radialGradient id="g15" cx="0.4" cy="0.35" r="0.7"><stop offset="0" stop-color="#ffeebb"/><stop offset="0.45" stop-color="#e2aa48"/><stop offset="1" stop-color="#a9741c"/></radialGradient><linearGradient id="t15" x1="0" x2="1" y1="0" y2="0"><stop offset="0" stop-color="#4f90c4"/><stop offset="1" stop-color="#86bbde"/></linearGradient></defs><rect x="0" y="0.200" width="8" height="1.800" fill="url(#t15)"/><rect x="3.200" y="0.200" width="1.900" height="9.800" fill="#65a2cf"/><circle cx="9.500" cy="10.400" r="2.550" fill="url(#g15)"/></svg></div><div class="c" style="left:39px;width:62px"><span class="t" style="transform:scale(0.985,1.14)">3390</span></div><div class="c" style="left:102px;width:269px"><span class="t" style="transform:scale(1.016,1.14)">Прочая краткосрочная кредиторская задолженн...</span></div><div class="c" style="left:372px;width:31px"><span class="t"></span></div><div class="c ctr" style="left:404px;width:29px"><span class="t">П</span></div><div class="c" style="left:434px;width:33px"><span class="t"></span></div><div class="c" style="left:468px;width:34px"></div><div class="c" style="left:503px;width:96px"><span class="t"></span></div><div class="c" style="left:600px;width:78px"><span class="t"></span></div><div class="c" style="left:679px;width:209px"><span class="t"></span></div><div class="c" style="left:889px;width:64px"><span class="t"></span></div></div>
<div class="row" style="top:325px"><div class="c" style="left:0px;width:38px"><svg class="ti" width="14" height="14" viewBox="0 0 14 14"><defs><radialGradient id="g16" cx="0.4" cy="0.35" r="0.7"><stop offset="0" stop-color="#ffeebb"/><stop offset="0.45" stop-color="#e2aa48"/><stop offset="1" stop-color="#a9741c"/></radialGradient><linearGradient id="t16" x1="0" x2="1" y1="0" y2="0"><stop offset="0" stop-color="#4f90c4"/><stop offset="1" stop-color="#86bbde"/></linearGradient></defs><rect x="0" y="0.200" width="8" height="1.800" fill="url(#t16)"/><rect x="3.200" y="0.200" width="1.900" height="9.800" fill="#65a2cf"/><circle cx="9.500" cy="10.400" r="2.550" fill="url(#g16)"/></svg></div><div class="c" style="left:39px;width:62px"><span class="t" style="transform:scale(0.985,1.14)">3391</span></div><div class="c" style="left:102px;width:269px"><span class="t" style="transform:scale(1.008,1.14)">Задолженность по возвратам реализованных го...</span></div><div class="c" style="left:372px;width:31px"><span class="t"></span></div><div class="c ctr" style="left:404px;width:29px"><span class="t">П</span></div><div class="c" style="left:434px;width:33px"><span class="t"></span></div><div class="c" style="left:468px;width:34px"><svg class="ck" width="8" height="8" viewBox="0 0 8 8"><path d="M0 2.200L2.500 4.300L7 0V2.800L2.500 6.900L0 4.300Z" fill="#2b2b2b"/></svg></div><div class="c" style="left:503px;width:96px"><span class="t" style="transform:scale(1.03,1.14)">Контрагенты</span></div><div class="c" style="left:600px;width:78px"><span class="t" style="transform:scale(1.045,1.14)">Договоры</span></div><div class="c" style="left:679px;width:209px"><span class="t" style="transform:scale(1.023,1.14)">Документы расчетов с контрагентами</span></div><div class="c" style="left:889px;width:64px"><span class="t">3310Н</span></div></div>
<div class="row" style="top:344px"><div class="c" style="left:0px;width:38px"><svg class="ti" width="14" height="14" viewBox="0 0 14 14"><defs><radialGradient id="g17" cx="0.4" cy="0.35" r="0.7"><stop offset="0" stop-color="#ffeebb"/><stop offset="0.45" stop-color="#e2aa48"/><stop offset="1" stop-color="#a9741c"/></radialGradient><linearGradient id="t17" x1="0" x2="1" y1="0" y2="0"><stop offset="0" stop-color="#4f90c4"/><stop offset="1" stop-color="#86bbde"/></linearGradient></defs><rect x="0" y="0.200" width="8" height="1.800" fill="url(#t17)"/><rect x="3.200" y="0.200" width="1.900" height="9.800" fill="#65a2cf"/><circle cx="9.500" cy="10.400" r="2.550" fill="url(#g17)"/></svg></div><div class="c" style="left:39px;width:62px"><span class="t" style="transform:scale(0.985,1.14)">3392</span></div><div class="c" style="left:102px;width:269px"><span class="t" style="transform:scale(0.992,1.14)">Задолженность по присужденным штрафам пеня...</span></div><div class="c" style="left:372px;width:31px"><span class="t"></span></div><div class="c ctr" style="left:404px;width:29px"><span class="t">П</span></div><div class="c" style="left:434px;width:33px"><span class="t"></span></div><div class="c" style="left:468px;width:34px"><svg class="ck" width="8" height="8" viewBox="0 0 8 8"><path d="M0 2.200L2.500 4.300L7 0V2.800L2.500 6.900L0 4.300Z" fill="#2b2b2b"/></svg></div><div class="c" style="left:503px;width:96px"><span class="t" style="transform:scale(1.03,1.14)">Контрагенты</span></div><div class="c" style="left:600px;width:78px"><span class="t" style="transform:scale(1.045,1.14)">Договоры</span></div><div class="c" style="left:679px;width:209px"><span class="t" style="transform:scale(1.023,1.14)">Документы расчетов с контрагентами</span></div><div class="c" style="left:889px;width:64px"><span class="t">3310Н</span></div></div>
<div class="sb"><div class="thumb"><i></i></div><div class="sbd"><svg width="7" height="7" viewBox="0 0 7 7" style="position:absolute;left:4px;top:7px"><defs><linearGradient id="ag" x1="0" x2="0" y1="0" y2="1"><stop offset="0" stop-color="#8a8a8a"/><stop offset="1" stop-color="#b4b4b4"/></linearGradient></defs><path d="M0 0h7L3.500 6.500z" fill="url(#ag)"/></svg></div></div>
</div>
</div>
<div class="red"></div>
</body></html>
